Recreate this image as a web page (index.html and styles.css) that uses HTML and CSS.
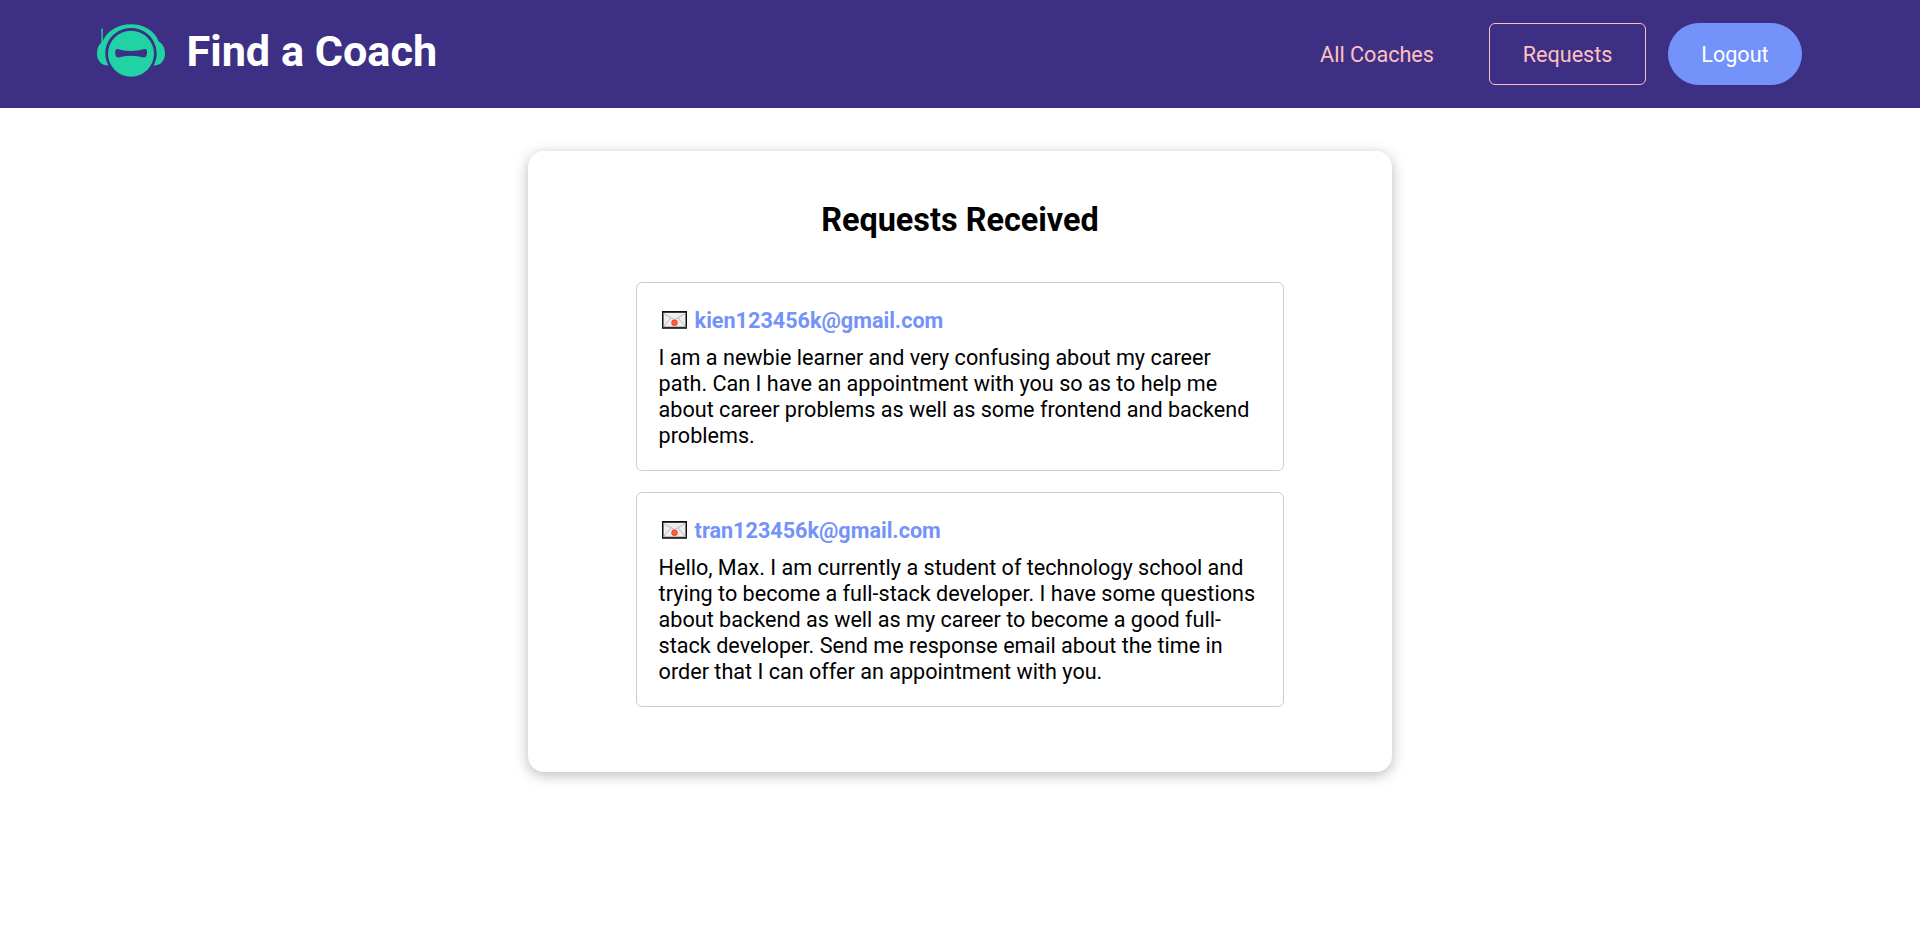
FILE: index.html
```html
<!DOCTYPE html>
<html lang="en">
<head>
<meta charset="utf-8">
<title>Find a Coach</title>
<link rel="stylesheet" href="styles.css">
</head>
<body>
<header class="site-header">
  <a class="brand">
    <svg class="brand-logo" viewBox="0 0 68 53">
      <g fill="#20d2a4">
        <circle cx="34" cy="29.7" r="23"/>
        <path d="M4.400 18.500V6.500a1 1 0 1 1 1.400 0V17C10 7 20.500 .2 34 .2S58 7 61.700 17.500C66 20 68 24 68 29.500 68 37 63.500 41.500 56.500 41.500 58.500 38 59.700 34 59.700 29.700 59.700 14.800 48 4 34 4S8.300 14.800 8.300 29.700C8.300 34 9.500 38 11.500 41.500 4.500 41.500 0 37 0 29.500 0 24.500 1.500 21 4.400 18.500Z"/>
      </g>
      <path fill="#3d3084" d="M20.500 25Q27 27.200 34 27T47.500 25Q50.500 24.800 50 29 49.500 33.600 47 33.600 40.500 31.800 34 31.800T21 33.600Q18.500 33.600 18.200 29 18 24.800 20.500 25Z"/>
    </svg>
    <h1 class="brand-name">Find a Coach</h1>
  </a>
  <nav class="nav">
    <a class="nav-link">All Coaches</a>
    <a class="nav-link nav-link-active">Requests</a>
    <button class="logout">Logout</button>
  </nav>
</header>
<main class="card">
  <h2 class="card-title">Requests Received</h2>
  <ul class="requests">
    <li class="request">
      <div class="sender">
        <svg class="mail" viewBox="0 0 25 18"><path fill="#111" d="M0 0h25v18H0z"/><path fill="#444" d="M0 16.500h25V18H0z"/><path fill="#eee" d="M1.500 1.800h22v14h-22z"/><path d="M1.500 2.500l11 6 11-6M1.500 15.500l7.500-8.500M23.500 15.500L16 7" fill="none" stroke="#bbb"/><circle cx="12.500" cy="11.700" r="3.200" fill="#f4482b"/><circle cx="12.500" cy="11.700" r="1.300" fill="none" stroke="#ff8a70" stroke-width=".7"/></svg>
        <a class="email">kien123456k@gmail.com</a>
      </div>
      <p class="message">I am a newbie learner and very confusing about my career path. Can I have an appointment with you so as to help me about career problems as well as some frontend and backend problems.</p>
    </li>
    <li class="request">
      <div class="sender">
        <svg class="mail" viewBox="0 0 25 18"><path fill="#111" d="M0 0h25v18H0z"/><path fill="#444" d="M0 16.500h25V18H0z"/><path fill="#eee" d="M1.500 1.800h22v14h-22z"/><path d="M1.500 2.500l11 6 11-6M1.500 15.500l7.500-8.500M23.500 15.500L16 7" fill="none" stroke="#bbb"/><circle cx="12.500" cy="11.700" r="3.200" fill="#f4482b"/><circle cx="12.500" cy="11.700" r="1.300" fill="none" stroke="#ff8a70" stroke-width=".7"/></svg>
        <a class="email">tran123456k@gmail.com</a>
      </div>
      <p class="message">Hello, Max. I am currently a student of technology school and trying to become a full-stack developer. I have some questions about backend as well as my career to become a good full-stack developer. Send me response email about the time in order that I can offer an appointment with you.</p>
    </li>
  </ul>
</main>
</body>
</html>
```
FILE: styles.css
```css
* { box-sizing: border-box; }
html { font-size: 21.6px; font-family: Roboto, sans-serif; }
body { margin: 0; background: #fff; color: #000; }
.site-header {
  height: 108px;
  padding: 0 118px 0 97px;
  background: #3d3084;
  display: flex;
  align-items: center;
  justify-content: space-between;
}
.brand { display: flex; align-items: flex-start; gap: 21.5px; padding-bottom: 5px; }
.brand-logo { width: 68px; height: 53px; }
.brand-name { margin: 0; color: #fff; font-size: 2rem; line-height: 56px; }
.nav { display: flex; align-items: center; gap: 22px; }
.nav-link, .logout {
  font: inherit;
  line-height: 26px;
  padding: 18px 1.5rem 16px;
  border: 1px solid transparent;
  color: #ffc0c0;
}
.nav-link-active { border-color: #ffc0c0; border-radius: 6px; }
.logout { background: #7393fa; border-color: #7393fa; color: #fff; border-radius: 31px; }
.card {
  width: 40rem;
  margin: 2rem auto;
  padding: 50px 5rem 65px;
  border-radius: 16px;
  box-shadow: 0 3px 14px rgba(0, 0, 0, .28);
}
.card-title { margin: 0 0 43px; font-size: 1.5rem; line-height: 38px; text-align: center; }
.requests { list-style: none; margin: 0; padding: 0; display: flex; flex-direction: column; gap: 1rem; }
.request { border: 1px solid #ccc; border-radius: 6px; padding: 1rem 1rem 21px; }
.sender { display: flex; align-items: center; gap: 8px; height: 40px; padding: 0 0 8px 3px; }
.mail { width: 25px; height: 18px; margin-top: -1px; }
.email { color: #7393fa; font-weight: 700; line-height: 26px; }
.message { margin: 0; line-height: 26px; }
```
